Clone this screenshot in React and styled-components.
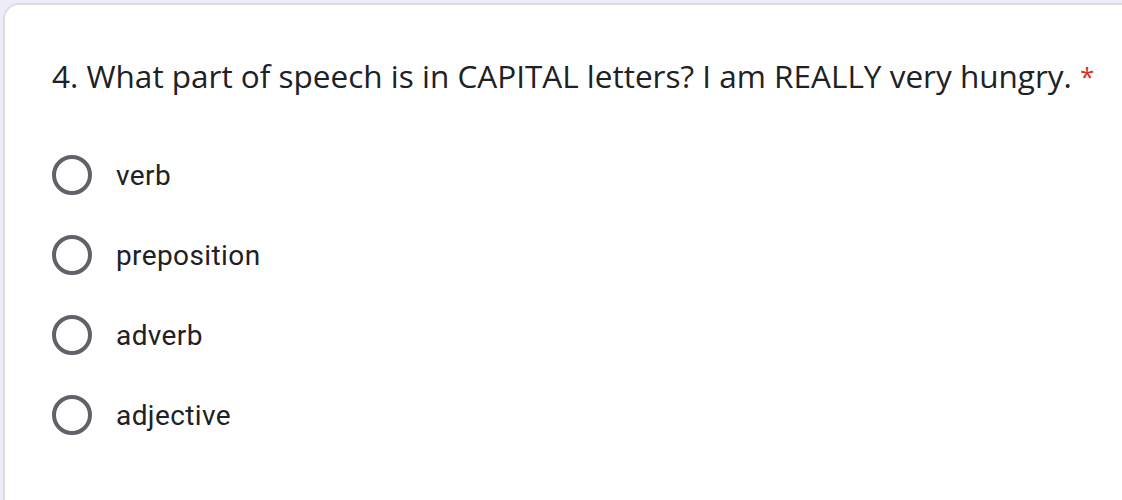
import React from "react";
import { styled, createGlobalStyle } from "styled-components";

const Global = createGlobalStyle`
  html, body {
    margin: 0;
    padding: 0;
    background: #f0ebf8;
    overflow: hidden;
  }
`;

const Page = styled.div`
  width: 1122px;
  height: 500px;
  padding: 3px 0 0 3px;
  box-sizing: border-box;
  overflow: hidden;
`;

const Card = styled.div`
  width: 1160px;
  height: 540px;
  background: #fff;
  border: 2px solid #dadce0;
  border-radius: 16px;
  box-sizing: border-box;
  padding: 45px 0 0 47px;
`;

const Question = styled.div`
  font-family: "Open Sans", "Noto Sans", sans-serif;
  font-size: 31.5px;
  line-height: 52px;
  color: #202124;
  white-space: nowrap;
`;

const Required = styled.span`
  color: #d93025;
  font-size: 26px;
  margin-left: 8px;
  vertical-align: top;
`;

const Options = styled.div`
  display: flex;
  flex-direction: column;
  gap: 40px;
  margin-top: 53px;
`;

const Option = styled.label`
  display: flex;
  align-items: center;
  gap: 24px;
  height: 40px;
`;

const Radio = styled.span`
  width: 40px;
  height: 40px;
  border: 4px solid #5f6368;
  border-radius: 50%;
  box-sizing: border-box;
  flex: none;
`;

const OptionText = styled.span`
  font-family: Roboto, "Liberation Sans", sans-serif;
  font-size: 28px;
  letter-spacing: 0.4px;
  color: #202124;
`;

const options = ["verb", "preposition", "adverb", "adjective"];

export default function App() {
  return (
    <Page>
      <Global />
      <Card>
        <Question>
          4. What part of speech is in CAPITAL letters? I am REALLY very hungry.
          <Required>*</Required>
        </Question>
        <Options>
          {options.map((o) => (
            <Option key={o}>
              <Radio />
              <OptionText>{o}</OptionText>
            </Option>
          ))}
        </Options>
      </Card>
    </Page>
  );
}
